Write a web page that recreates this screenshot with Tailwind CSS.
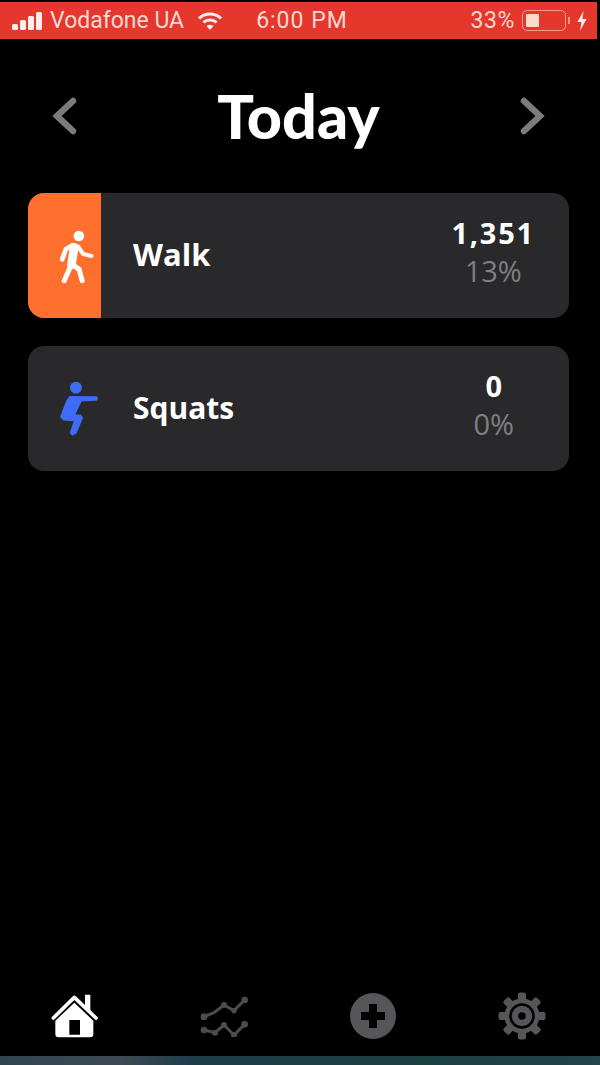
<!DOCTYPE html>
<html lang="en">
<head>
  <meta charset="UTF-8" />
  <meta name="viewport" content="width=device-width, initial-scale=1" />
  <title>Today</title>
  <script src="https://cdn.jsdelivr.net/npm/@tailwindcss/browser@4"></script>
</head>
<body class="bg-black">
  <div class="flex flex-col h-[1065px] w-[600px] overflow-hidden bg-black text-white font-['Open_Sans',sans-serif]">

    <!-- status bar -->
    <div class="mt-[2px] h-[37px] mr-[3px] shrink-0 bg-[#e5372c] flex items-center pl-[12px] pr-[10px] text-[23px] text-[#fbd9d4] font-['Roboto',sans-serif]">
      <svg width="32" height="20" viewBox="0 0 32 20" class="shrink-0 mt-[1px]" fill="#fdeeee">
        <rect x="0" y="13" width="6" height="6" rx="1.5" />
        <rect x="8" y="9" width="6" height="10" rx="1.5" />
        <rect x="16" y="5" width="6" height="14" rx="1.5" />
        <rect x="24" y="1" width="6" height="18" rx="1.5" />
      </svg>
      <span class="ml-[6px] mt-[2px]">Vodafone UA</span>
      <svg width="26" height="20" viewBox="0 0 26 20" class="ml-[13px] shrink-0" fill="none" stroke="#fdeeee" stroke-width="3">
        <path d="M2 7.5 C8 1.5 18 1.5 24 7.5" />
        <path d="M6.5 11.5 C10 8 16 8 19.5 11.5" />
        <path d="M13 19 L9.5 15 C11.5 13.4 14.5 13.4 16.5 15 Z" fill="#fdeeee" stroke="none" />
      </svg>
      <span class="ml-[33px] mt-[2px] tracking-[1px]">6:00 PM</span>
      <span class="ml-auto mt-[2px] tracking-[0.6px]">33%</span>
      <div class="ml-[7px] w-[44px] h-[21px] rounded-[5px] border border-[#f59a91] p-[3px] mr-[2px] shrink-0">
        <div class="w-[13px] h-full bg-[#fbdccb] rounded-[1px]"></div>
      </div>
      <div class="w-[2px] h-[7px] bg-[#f59a91] shrink-0"></div>
      <svg width="10" height="20" viewBox="0 0 10 20" class="ml-[7px] shrink-0" fill="#fdeeee">
        <path d="M6.5 0 L0.5 11 L4.5 11 L3 20 L9.5 8 L5.5 8 Z" />
      </svg>
    </div>

    <!-- header -->
    <div class="h-[154px] shrink-0 flex items-center justify-between pl-[52px] pr-[55px]">
      <svg width="26" height="38" viewBox="0 0 26 38" fill="none" stroke="#7b7b7b" stroke-width="6.5" stroke-linecap="round">
        <path d="M21 4 L5 19 L21 34" />
      </svg>
      <h1 class="text-[61px] leading-none font-black font-['Lato',sans-serif] mb-[1px]">Today</h1>
      <svg width="26" height="38" viewBox="0 0 26 38" fill="none" stroke="#7b7b7b" stroke-width="6.5" stroke-linecap="round">
        <path d="M5 4 L21 19 L5 34" />
      </svg>
    </div>

    <!-- rows -->
    <div class="flex flex-col gap-[28px] pl-[28px] pr-[31px]">
      <div class="h-[125px] rounded-[16px] bg-[#29282b] flex items-center overflow-hidden pr-[34px]">
        <div class="w-[73px] h-full shrink-0 bg-[#ff6f2d] flex items-center pl-[25px]">
          <svg width="47" height="60" viewBox="100 120 140 180" fill="none" stroke="#fff" stroke-linecap="round" stroke-linejoin="round">
            <circle cx="177" cy="150" r="16" fill="#fff" stroke="none" />
            <path d="M163 184 L155 236" stroke-width="26" />
            <path d="M158 178 L138 190 L127 220" stroke-width="14" />
            <path d="M175 182 L190 204 L215 210" stroke-width="12" />
            <path d="M158 236 L178 250 L187 284" stroke-width="15" />
            <path d="M150 246 L133 284" stroke-width="15" />
          </svg>
        </div>
        <span class="ml-[32px] mb-[3px] text-[31px] font-bold">Walk</span>
        <div class="ml-auto -mt-[6px] flex flex-col items-center">
          <span class="text-[29px] leading-[36px] font-bold tracking-[1.8px]">1,351</span>
          <span class="text-[29px] leading-[39px] text-[#807f82]">13%</span>
        </div>
      </div>
      <div class="h-[125px] rounded-[16px] bg-[#29282b] flex items-center pr-[55px]">
        <div class="w-[73px] h-full shrink-0 flex items-center pl-[26px]">
          <svg width="50" height="63" viewBox="100 110 150 190" fill="#3f6cf6">
            <circle cx="170" cy="139" r="19" />
            <path d="M150 165 L236 166 L241 172 L236 180 L188 183 L168 224 L186 224 L193 234 L172 285 L158 292 L150 283 L163 246 L130 243 L119 232 L140 178 Z" />
          </svg>
        </div>
        <span class="ml-[32px] mb-[2px] text-[30px] font-bold">Squats</span>
        <div class="ml-auto -mt-[5px] flex flex-col items-center">
          <span class="text-[29px] leading-[35px] font-bold">0</span>
          <span class="text-[29px] leading-[41px] text-[#807f82]">0%</span>
        </div>
      </div>
    </div>

    <!-- tab bar -->
    <div class="mt-auto h-[80px] shrink-0 grid grid-cols-[repeat(4,149px)] items-center justify-items-center">
      <svg width="50" height="48" viewBox="60 50 150 144">
        <path d="M133 82 L190 136 L190 176 Q190 186 180 186 L86 186 Q76 186 76 176 L76 136 Z M118 134 L118 178 L150 178 L150 134 Z" fill="#fff" fill-rule="evenodd" />
        <path d="M70 128 L133 66 L198 128" fill="none" stroke="#fff" stroke-width="11" stroke-linecap="round" stroke-linejoin="round" />
        <path d="M165 58 L181 58 L181 108 L165 92 Z" fill="#fff" />
      </svg>
      <svg width="50" height="42" viewBox="505 55 150 126" fill="none" stroke="#4c4b4e" stroke-width="9" stroke-linecap="round" stroke-linejoin="round">
        <path d="M520 120 L550 108 L580 85 L610 102 L642 70" />
        <path d="M520 160 L553 168 L580 145 L610 175 L642 143" />
        <g fill="#4c4b4e" stroke="none">
          <circle cx="520" cy="120" r="10" />
          <circle cx="580" cy="85" r="9" />
          <circle cx="610" cy="102" r="8" />
          <circle cx="642" cy="70" r="10" />
          <circle cx="520" cy="160" r="10" />
          <circle cx="553" cy="168" r="9" />
          <circle cx="580" cy="145" r="9" />
          <circle cx="610" cy="175" r="9" />
          <circle cx="642" cy="143" r="10" />
        </g>
      </svg>
      <div class="w-[46px] h-[46px] rounded-full bg-[#565558] flex items-center justify-center">
        <svg width="26" height="26" viewBox="0 0 26 26" fill="#000">
          <path d="M9 1 L17 1 L17 9 L25 9 L25 17 L17 17 L17 25 L9 25 L9 17 L1 17 L1 9 L9 9 Z" />
        </svg>
      </div>
      <svg width="48" height="48" viewBox="-24 -24 48 48" fill="#565558">
        <rect x="-4" y="-23.5" width="8" height="47" rx="2" />
        <rect x="-4" y="-23.5" width="8" height="47" rx="2" transform="rotate(45)" />
        <rect x="-4" y="-23.5" width="8" height="47" rx="2" transform="rotate(90)" />
        <rect x="-4" y="-23.5" width="8" height="47" rx="2" transform="rotate(135)" />
        <circle r="17.5" />
        <circle r="11.5" fill="none" stroke="#000" stroke-width="2.6" />
        <circle r="3.8" fill="#000" />
      </svg>
    </div>

    <!-- strip along the bottom edge -->
    <div class="h-[9px] shrink-0 bg-[linear-gradient(90deg,#2f4552,#3c4a52_20%,#1f3c4c_32%,#1c3f40_70%,#24434c)]"></div>
  </div>
</body>
</html>
